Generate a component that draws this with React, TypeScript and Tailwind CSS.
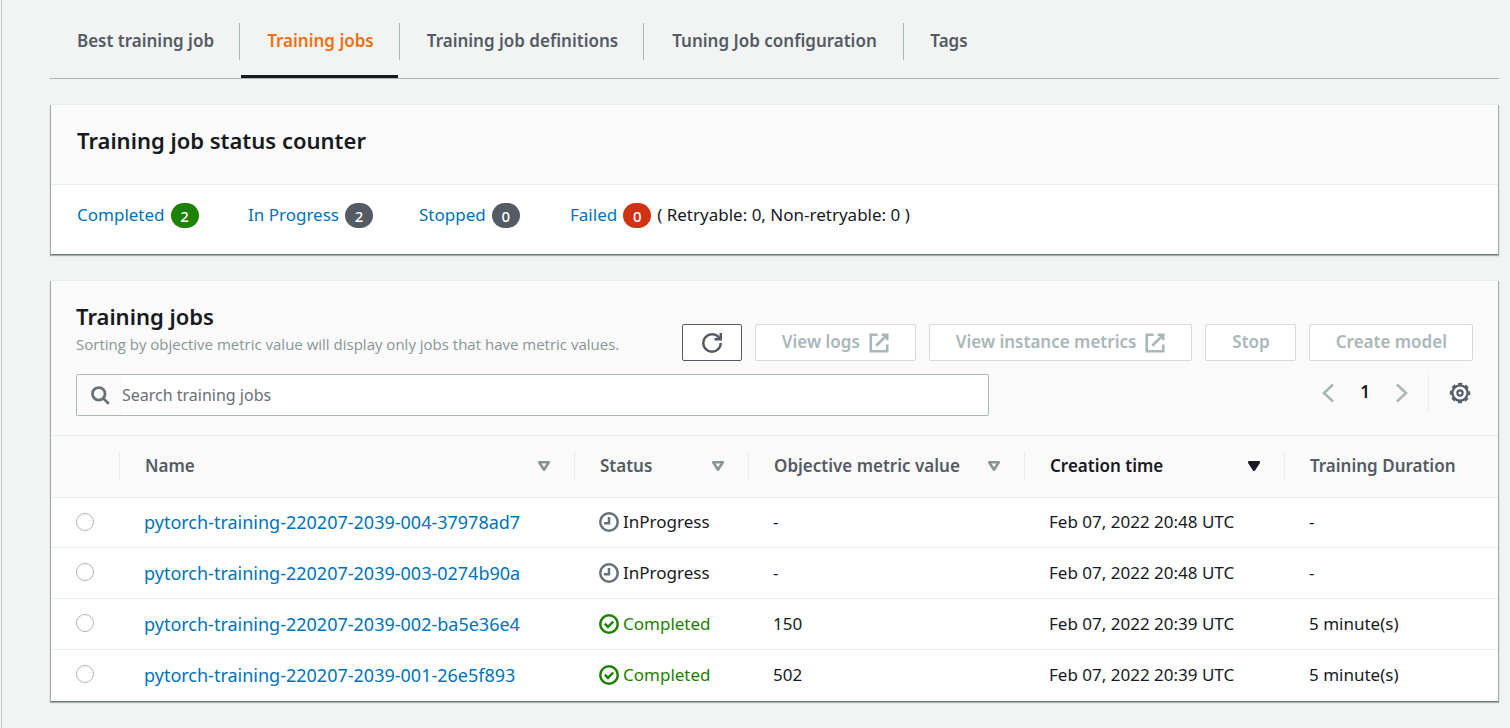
import React from "react";

const tabs = [
  { label: "Best training job", width: "w-[190px]" },
  { label: "Training jobs", width: "w-[160px]", active: true },
  { label: "Training job definitions", width: "w-[244px]" },
  { label: "Tuning Job configuration", width: "w-[260px]" },
  { label: "Tags", width: "w-[88px]" },
];

const counters = [
  { label: "Completed", count: 2, color: "bg-[#1d8102]" },
  { label: "In Progress", count: 2, color: "bg-[#545b64]" },
  { label: "Stopped", count: 0, color: "bg-[#545b64]" },
  { label: "Failed", count: 0, color: "bg-[#d13212]", note: "( Retryable: 0, Non-retryable: 0 )" },
];

const columns = [
  { label: "Name", sort: "open" },
  { label: "Status", sort: "open" },
  { label: "Objective metric value", sort: "open" },
  { label: "Creation time", sort: "filled" },
  { label: "Training Duration", sort: "none" },
];

const jobs = [
  { name: "pytorch-training-220207-2039-004-37978ad7", done: false, metric: "-", created: "Feb 07, 2022 20:48 UTC", duration: "-" },
  { name: "pytorch-training-220207-2039-003-0274b90a", done: false, metric: "-", created: "Feb 07, 2022 20:48 UTC", duration: "-" },
  { name: "pytorch-training-220207-2039-002-ba5e36e4", done: true, metric: "150", created: "Feb 07, 2022 20:39 UTC", duration: "5 minute(s)" },
  { name: "pytorch-training-220207-2039-001-26e5f893", done: true, metric: "502", created: "Feb 07, 2022 20:39 UTC", duration: "5 minute(s)" },
];

const card =
  "border-x border-b border-[#a3adb0] border-b-[#6d797b] bg-white shadow-[0_1px_1px_0_rgba(0,28,36,0.3),0_-1px_0_0_#eaeded]";

function RefreshIcon() {
  return (
    <svg width="20" height="20" viewBox="0 0 16 16" fill="none" stroke="currentColor" strokeWidth="2" aria-hidden="true">
      <path d="M10 5h5V0" />
      <path d="M15 8a6.95 6.95 0 0 1-7 7 6.95 6.95 0 0 1-7-7 6.95 6.95 0 0 1 7-7 6.870 6.870 0 0 1 6.300 4" />
    </svg>
  );
}

function ExternalIcon() {
  return (
    <svg width="22" height="22" viewBox="0 0 16 16" fill="none" stroke="currentColor" strokeWidth="1.9" aria-hidden="true">
      <path d="M10 2h4v4" />
      <path d="M6 10l8-8" />
      <path d="M14 9.048V14H2V2h5" />
    </svg>
  );
}

function SearchIcon() {
  return (
    <svg width="20" height="20" viewBox="0 0 16 16" fill="none" stroke="currentColor" strokeWidth="2.2" aria-hidden="true">
      <circle cx="7" cy="7" r="5" />
      <path d="M15 15l-4.500-4.500" />
    </svg>
  );
}

function ClockIcon() {
  return (
    <svg width="20" height="20" viewBox="0 0 16 16" fill="none" stroke="currentColor" strokeWidth="2" className="shrink-0" aria-hidden="true">
      <circle cx="8" cy="8" r="7" />
      <path d="M8 4v5H4" />
    </svg>
  );
}

function CheckIcon() {
  return (
    <svg width="20" height="20" viewBox="0 0 16 16" fill="none" stroke="currentColor" strokeWidth="2" className="shrink-0" aria-hidden="true">
      <circle cx="8" cy="8" r="7" />
      <path d="M4.700 7.800l2.500 2.500 4.200-4.300" />
    </svg>
  );
}

function Chevron({ d }: { d: string }) {
  return (
    <svg width="12" height="20" viewBox="0 0 12 20" fill="none" stroke="currentColor" strokeWidth="2.6" aria-hidden="true">
      <path d={d} />
    </svg>
  );
}

function GearIcon() {
  return (
    <svg width="22" height="22" viewBox="0 0 22 22" fill="none" stroke="currentColor" strokeWidth="2.2" aria-hidden="true">
      <circle cx="11" cy="11" r="2.600" />
      <circle cx="11" cy="11" r="7.600" />
      <circle cx="11" cy="11" r="9.200" strokeWidth="2" strokeDasharray="4.100 3.126" strokeDashoffset="2.050" />
    </svg>
  );
}

function SortIcon({ filled }: { filled: boolean }) {
  return (
    <svg width="14" height="12" viewBox="0 0 14 12" stroke="currentColor" strokeWidth="2.600" strokeLinejoin="round" className={filled ? "text-[#16191f]" : "text-[#879596]"} fill={filled ? "currentColor" : "none"} aria-hidden="true">
      <path d="M2.200 2.300h9.600L7 9.700z" />
    </svg>
  );
}

function ActionButton({ label, external }: { label: string; external?: boolean }) {
  return (
    <button type="button" disabled className="flex h-[37px] items-center gap-2 rounded-xs border border-[#d5dbdb] bg-white px-[25px] font-semibold text-[#aab7b8]">
      <span className="pb-0.5 pl-px">{label}</span>
      {external && <ExternalIcon />}
    </button>
  );
}

export default function App() {
  return (
    <div className="min-h-screen bg-[#f2f3f3] pl-px">
      <main className="min-h-screen border-l border-[#c9cdd1] pr-[11px] pb-6 pl-12 font-['Noto_Sans','Open_Sans',sans-serif] text-[17px] leading-6 text-[#16191f]">
        <nav className="flex h-[79px] border-b border-[#aab7b8] pt-[23px]">
          {tabs.map((tab, i) => (
            <a
              key={tab.label}
              href="#"
              aria-current={tab.active ? "page" : undefined}
              className={`relative flex h-[37px] shrink-0 items-center justify-center pb-0.5 pl-0.5 font-semibold whitespace-nowrap ${tab.width} ${i < tabs.length - 1 ? "border-r border-[#aab7b8]" : ""} ${tab.active ? "text-[#ec7211]" : "text-[#545b64]"}`}
            >
              {tab.label}
              {tab.active && <span className="absolute -bottom-[18px] left-px h-[3px] w-[157px] bg-[#16191f]" />}
            </a>
          ))}
        </nav>

        <section className={`mt-[26px] ${card}`}>
          <header className="border-b border-[#eaeded] bg-[#fafafa] px-[26px] pt-[19px] pb-7">
            <h2 className="text-[22px] leading-8 font-semibold">Training job status counter</h2>
          </header>
          <div className="grid grid-cols-[171px_171px_151px_auto] px-[26px] pt-[17px] pb-[25px]">
            {counters.map((c) => (
              <div key={c.label} className="flex items-center gap-1.5 leading-[26px] whitespace-nowrap">
                <a href="#" className="pb-px text-[#0073bb]">{c.label}</a>
                <span className={`flex h-[25px] w-7 items-center justify-center rounded-full text-[15px] font-medium text-white ${c.color}`}>{c.count}</span>
                {c.note && <span className="pb-px">{c.note}</span>}
              </div>
            ))}
          </div>
        </section>

        <section className={`mt-[26px] ${card}`}>
          <header className="bg-[#fafafa] px-[25px] pt-[19px] pb-[19px]">
            <div className="flex items-end justify-between">
              <div>
                <h2 className="text-[22px] leading-8 font-semibold">Training jobs</h2>
                <p className="font-['Open_Sans',sans-serif] text-[15px] text-[#879596]">Sorting by objective metric value will display only jobs that have metric values.</p>
              </div>
              <div className="-mb-[5px] flex gap-[13px]">
                <button type="button" aria-label="Refresh" className="flex h-[37px] w-[60px] items-center justify-center rounded-xs border border-[#545b64] bg-white text-[#545b64]">
                  <RefreshIcon />
                </button>
                <ActionButton label="View logs" external />
                <ActionButton label="View instance metrics" external />
                <ActionButton label="Stop" />
                <ActionButton label="Create model" />
              </div>
            </div>
            <div className="mt-[18px] flex items-start justify-between">
              <div className="flex h-[42px] w-[913px] items-center rounded-xs border border-[#aab7b8] bg-white">
                <label htmlFor="job-search" aria-label="Search" className="flex h-full w-[45px] items-center justify-center bg-[#fafafa] text-[#687078]">
                  <SearchIcon />
                </label>
                <input id="job-search" type="search" placeholder="Search training jobs" className="h-full min-w-0 flex-1 text-base outline-none placeholder:text-[#687078]" />
              </div>
              <div className="flex h-[37px] items-center">
                <button type="button" aria-label="Previous page" className="text-[#aab7b8]"><Chevron d="M11 1.500L2 10l9 8.500" /></button>
                <span className="w-[62px] pb-0.5 text-center font-semibold">1</span>
                <button type="button" aria-label="Next page" className="text-[#aab7b8]"><Chevron d="M1 1.500L10 10l-9 8.500" /></button>
                <span className="ml-5 h-full w-px bg-[#eaeded]" />
                <button type="button" aria-label="Preferences" className="mr-0.5 ml-5 text-[#545b64]"><GearIcon /></button>
              </div>
            </div>
          </header>

          <table className="w-full table-fixed border-collapse text-left">
            <colgroup>
              <col className="w-[69px]" />
              <col />
              <col className="w-[174px]" />
              <col className="w-[276px]" />
              <col className="w-[260px]" />
              <col className="w-[213px]" />
            </colgroup>
            <thead>
              <tr className="h-[62px] border-y border-[#eaeded] bg-[#fafafa]">
                <th scope="col" className="p-0 pb-0.5">
                  <div className="h-[30px] border-r border-[#eaeded]" />
                </th>
                {columns.map((col) => (
                  <th key={col.label} scope="col" className={`p-0 pb-0.5 font-semibold whitespace-nowrap ${col.sort === "filled" ? "" : "text-[#545b64]"}`}>
                    <div className={`flex h-[30px] items-center justify-between pr-[23px] pl-[25px] ${col.sort === "none" ? "" : "border-r border-[#eaeded]"}`}>
                      {col.label}
                      {col.sort !== "none" && (
                        <button type="button" aria-label={`Sort by ${col.label}`}><SortIcon filled={col.sort === "filled"} /></button>
                      )}
                    </div>
                  </th>
                ))}
              </tr>
            </thead>
            <tbody>
              {jobs.map((job) => (
                <tr key={job.name} className="h-[51px] border-b border-[#eaeded] whitespace-nowrap first:h-[50px] last:border-b-0">
                  <td className="p-0 pb-0.5 pl-[25px]">
                    <input type="radio" name="job" aria-label={job.name} className="block size-[18px] appearance-none rounded-full border border-[#aab7b8] bg-white" />
                  </td>
                  <td className="p-0 pb-px pl-6 text-lg leading-6"><a href="#" className="text-[#0073bb]">{job.name}</a></td>
                  <td className="p-0 pb-px pl-6">
                    <span className="flex items-center gap-1">
                      <span className={job.done ? "text-[#1d8102]" : "text-[#687078]"}>{job.done ? <CheckIcon /> : <ClockIcon />}</span>
                      <span className={job.done ? "text-[#1d8102]" : ""}>{job.done ? "Completed" : "InProgress"}</span>
                    </span>
                  </td>
                  <td className="p-0 pb-px pl-6">{job.metric}</td>
                  <td className="p-0 pb-px pl-6">{job.created}</td>
                  <td className="p-0 pb-px pl-6">{job.duration}</td>
                </tr>
              ))}
            </tbody>
          </table>
        </section>
      </main>
    </div>
  );
}
